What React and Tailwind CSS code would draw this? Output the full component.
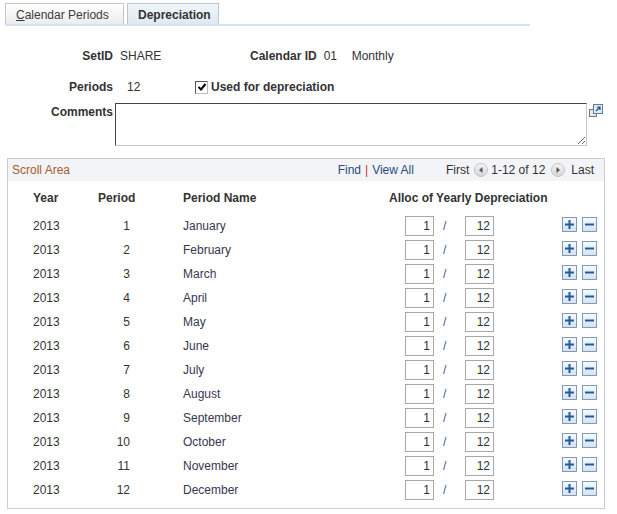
import React from "react";

const months = [
  "January", "February", "March", "April", "May", "June",
  "July", "August", "September", "October", "November", "December",
];

function PlusBtn() {
  return (
    <div className="w-[15px] h-[15px] border border-[#7f9ab8] bg-gradient-to-b from-[#f7fafd] to-[#d5e2ef] flex items-center justify-center">
      <svg width="9" height="9" viewBox="0 0 9 9">
        <rect x="0" y="3.5" width="9" height="2" fill="#1d5aa3" />
        <rect x="3.5" y="0" width="2" height="9" fill="#1d5aa3" />
      </svg>
    </div>
  );
}

function MinusBtn() {
  return (
    <div className="w-[15px] h-[15px] border border-[#7f9ab8] bg-gradient-to-b from-[#f7fafd] to-[#d5e2ef] flex items-center justify-center">
      <svg width="9" height="9" viewBox="0 0 9 9">
        <rect x="0" y="3.5" width="9" height="2" fill="#1d5aa3" />
      </svg>
    </div>
  );
}

function NavIcon({ dir }) {
  return (
    <svg width="14" height="14" viewBox="0 0 14 14">
      <defs>
        <linearGradient id={"g" + dir} x1="0" y1="0" x2="0" y2="1">
          <stop offset="0" stopColor="#f6f6f6" />
          <stop offset="1" stopColor="#d4d4d4" />
        </linearGradient>
      </defs>
      <circle cx="7" cy="7" r="6.5" fill={"url(#g" + dir + ")"} stroke="#c4c4c4" />
      {dir === "left" ? (
        <path d="M8.5 4 L5 7 L8.5 10 Z" fill="#555" />
      ) : (
        <path d="M5.5 4 L9 7 L5.5 10 Z" fill="#555" />
      )}
    </svg>
  );
}

function ExpandIcon() {
  return (
    <svg width="14" height="14" viewBox="0 0 14 14">
      <rect x="0.5" y="5.5" width="7" height="7" fill="#e8e8e8" stroke="#777" />
      <rect x="4.5" y="0.5" width="9" height="9" fill="#dce8f4" stroke="#5d7fa6" />
      <path d="M7 7 L11 3 M8 3 L11 3 L11 6" stroke="#2c4f7c" strokeWidth="1.2" fill="none" />
    </svg>
  );
}

function CheckBox() {
  return (
    <div className="w-[13px] h-[13px] border border-t-[#555] border-l-[#555] border-b-[#bbb] border-r-[#bbb] bg-white flex items-center justify-center">
      <svg width="10" height="10" viewBox="0 0 10 10">
        <path d="M1.5 5 L4 7.5 L8.5 2" stroke="#000" strokeWidth="2" fill="none" />
      </svg>
    </div>
  );
}

function NumBox({ value }) {
  return (
    <div className="w-[29px] h-[20px] border border-[#a8a8a8] bg-white text-right pr-[3px] leading-[18px] text-[#333]">
      {value}
    </div>
  );
}

export default function App() {
  return (
    <div className="w-[617px] h-[514px] bg-white font-['Liberation_Sans',Arial,sans-serif] text-[12px] leading-[16px] text-[#333] pt-[3px] overflow-hidden">
      {/* Tabs */}
      <div className="ml-[5px] w-[525px] border-b-2 border-[#d6e2ef] flex items-end gap-[3px]">
        <div className="w-[119px] h-[21px] border border-b-0 border-[#c6c6c6] bg-gradient-to-b from-[#ffffff] to-[#ececec] pl-[10px] pt-[1px] flex items-center text-[#3c3c3c]">
          <span>
            <span className="underline">C</span>alendar Periods
          </span>
        </div>
        <div className="w-[92px] h-[21px] border border-b-0 border-[#b9c6d4] bg-gradient-to-b from-[#f1f5fa] to-[#dfe8f2] pl-[10px] pt-[1px] flex items-center font-bold text-[#333]">
          Depreciation
        </div>
      </div>

      {/* Row 1 */}
      <div className="mt-[22px] flex items-center h-[16px]">
        <div className="w-[113px] text-right font-bold">SetID</div>
        <div className="ml-[7px] w-[130px]">SHARE</div>
        <div className="font-bold">Calendar ID</div>
        <div className="ml-[7px] w-[28px]">01</div>
        <div>Monthly</div>
      </div>

      {/* Row 2 */}
      <div className="mt-[15px] flex items-center h-[16px]">
        <div className="w-[113px] text-right font-bold">Periods</div>
        <div className="ml-[14px] w-[68px]">12</div>
        <CheckBox />
        <div className="ml-[3px] font-bold">Used for depreciation</div>
      </div>

      {/* Row 3 */}
      <div className="mt-[8px] flex items-start">
        <div className="w-[113px] text-right font-bold mt-[1px]">Comments</div>
        <textarea
          className="ml-[2px] w-[472px] h-[43px] border border-t-[#444] border-l-[#444] border-b-[#c8c8c8] border-r-[#c8c8c8] bg-white outline-none"
          defaultValue=""
        />
        <div className="ml-[2px] mt-[1px]">
          <ExpandIcon />
        </div>
      </div>

      {/* Scroll area */}
      <div className="mt-[12px] ml-[7px] w-[598px] h-[351px] border border-[#c8ced6]">
        <div className="h-[22px] bg-[#f2f4f7] flex items-center pl-[4px] pr-[10px]">
          <span className="text-[#a55d30]">Scroll Area</span>
          <span className="ml-auto text-[#2c4b83]">Find</span>
          <span className="mx-[4px] text-[#c0392b]">|</span>
          <span className="text-[#2c4b83]">View All</span>
          <span className="ml-[32px] text-[#333]">First</span>
          <span className="ml-[5px] flex">
            <NavIcon dir="left" />
          </span>
          <span className="ml-[3px] text-[#333]">1-12 of 12</span>
          <span className="ml-[6px] flex">
            <NavIcon dir="right" />
          </span>
          <span className="ml-[6px] text-[#333]">Last</span>
        </div>

        <div className="mt-[5px] h-[24px] flex items-center pl-[25px] font-bold">
          <div className="w-[65px]">Year</div>
          <div className="w-[85px]">Period</div>
          <div className="w-[206px]">Period Name</div>
          <div>Alloc of Yearly Depreciation</div>
        </div>

        <div className="mt-[4px]">
          {months.map((m, i) => (
            <div key={m} className="h-[24px] flex items-center pl-[25px]">
              <div className="w-[65px]">2013</div>
              <div className="w-[32px] text-right">{i + 1}</div>
              <div className="w-[53px]" />
              <div className="w-[222px] text-[#363650]">{m}</div>
              <NumBox value="1" />
              <div className="w-[31px] pl-[9px] text-[#3b5a94]">/</div>
              <NumBox value="12" />
              <div className="ml-[68px] self-start mt-[3px] flex gap-[5px]">
                <PlusBtn />
                <MinusBtn />
              </div>
            </div>
          ))}
        </div>
      </div>
    </div>
  );
}
